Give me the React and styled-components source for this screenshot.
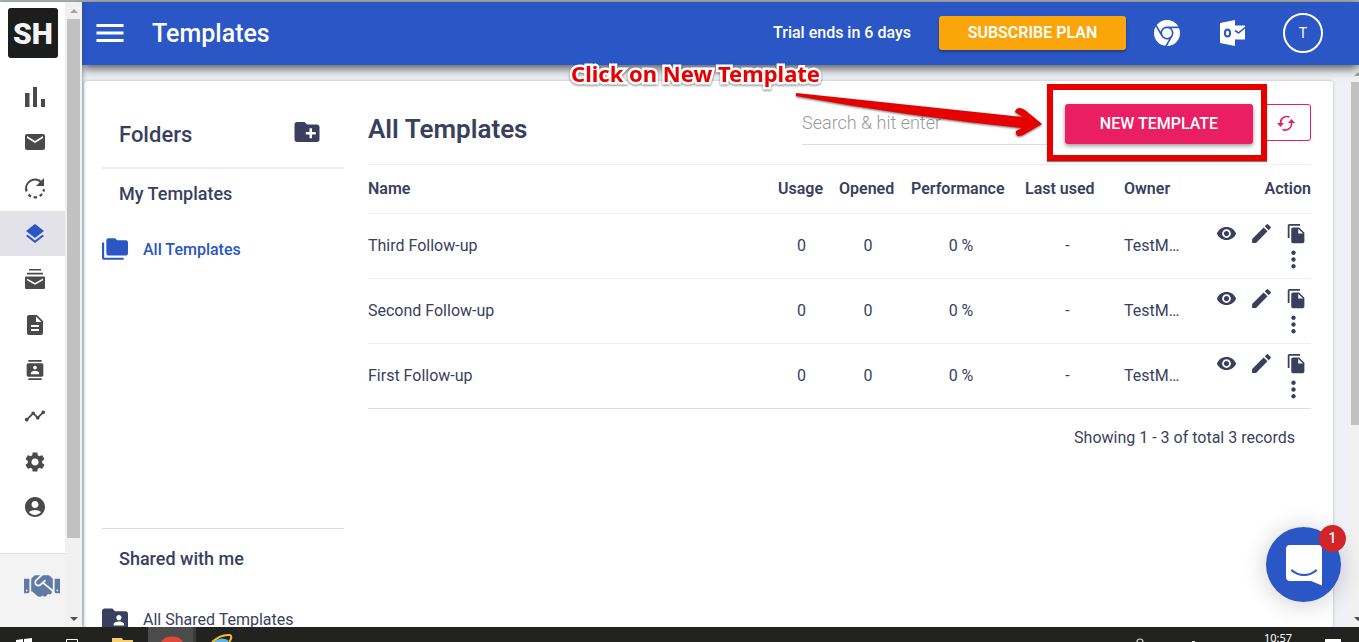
import styled, { createGlobalStyle, css } from "styled-components";
import {
  MdMenu,
  MdEmail,
  MdLayers,
  MdDescription,
  MdContacts,
  MdTimeline,
  MdSettings,
  MdAccountCircle,
  MdCreateNewFolder,
  MdFolderShared,
  MdVisibility,
  MdEdit,
  MdFileCopy,
  MdMoreVert,
} from "react-icons/md";
import { FaHandshake } from "react-icons/fa";

const GlobalStyle = createGlobalStyle`
  * {
    box-sizing: border-box;
  }
  body {
    margin: 0;
    overflow: hidden;
    font-family: Roboto, "Liberation Sans", sans-serif;
    font-size: 16px;
    color: #3a3f5e;
  }
  h1, h2, h3, p, ul {
    margin: 0;
    padding: 0;
  }
  button {
    font-family: inherit;
    cursor: pointer;
  }
`;

const LogoMark = () => (
  <svg width="50" height="50" viewBox="0 0 50 50" fill="#f4f4f4" fontFamily="Roboto, sans-serif" fontSize="30" fontWeight="900">
    <text x="25" y="36" textAnchor="middle">SH</text>
  </svg>
);

const ChartIcon = () => (
  <svg width="24" height="24" viewBox="0 0 24 24" fill="currentColor">
    <path d="M2 8h4.500v14H2zM10 2h4v20h-4zM18 14h4v8h-4z" />
  </svg>
);

const RestartIcon = () => (
  <svg width="24" height="24" viewBox="0 0 24 24" fill="none" stroke="currentColor" strokeWidth="2.2">
    <path d="M3.6 15.5A9 9 0 0 1 18.5 6.2" />
    <path d="M21 2v8h-8z" fill="currentColor" stroke="none" />
    <path d="M5.5 18.5a9 9 0 0 0 2.6 1.9M10.6 21.2a9 9 0 0 0 3.4-.1M16.6 20a9 9 0 0 0 2.5-2M20.4 15.6a9 9 0 0 0 .6-2.4" />
  </svg>
);

const StackedMailIcon = () => (
  <svg width="24" height="24" viewBox="0 0 24 24" fill="currentColor">
    <path d="M6 2h12v1.6H6zM4 5.8h16v1.7H4z" />
    <path d="M3 9.5h18a1 1 0 0 1 1 1V21a1 1 0 0 1-1 1H3a1 1 0 0 1-1-1V10.500a1 1 0 0 1 1-1zm1 2v1.800l8 4.500 8-4.500v-1.800l-8 4.500z" fillRule="evenodd" />
  </svg>
);

const FoldersIcon = () => (
  <svg width="26" height="26" viewBox="0 0 24 24" fill="currentColor">
    <path d="M22 4h-8l-2-2H6a2 2 0 0 0-2 2v12a2 2 0 0 0 2 2h16a2 2 0 0 0 2-2V6a2 2 0 0 0-2-2M2 6H0v14a2 2 0 0 0 2 2h18v-2H2V6z" />
  </svg>
);

const ChromeIcon = () => (
  <svg width="26" height="26" viewBox="4 4 16 16" fill="currentColor">
    <path d="M12 20l3.460-6h-.010c.340-.600.550-1.270.550-2 0-1.200-.540-2.270-1.380-3h4.790c.380.930.590 1.940.590 3a8 8 0 0 1-8 8M4 12c0-1.460.390-2.820 1.070-4l3.470 6h.010c.690 1.190 1.950 2 3.450 2 .450 0 .880-.090 1.290-.230l-2.400 4.140C7 19.370 4 16.040 4 12m11 0a3 3 0 0 1-6 0 3 3 0 0 1 6 0m-3-8c2.960 0 5.540 1.610 6.920 4H12c-1.940 0-3.550 1.380-3.920 3.210L5.700 7.080C7.160 5.210 9.440 4 12 4" />
  </svg>
);

const OutlookIcon = () => (
  <svg width="26" height="26" viewBox="0 0 26 26">
    <path d="M0 3l15-3v26L0 23z" fill="#fff" />
    <ellipse cx="7.500" cy="13" rx="2.600" ry="3.600" fill="none" stroke="#2a56c6" strokeWidth="2" />
    <path d="M15 5.500h10v14H15z" fill="#fff" />
    <path d="M15 10.500l3.500 2.500L25 7.500" fill="none" stroke="#2a56c6" strokeWidth="1.600" />
  </svg>
);

const RefreshIcon = () => (
  <svg width="20" height="20" viewBox="0 0 20 20" fill="none" stroke="currentColor" strokeWidth="1.600">
    <path d="M13.500 4A6.500 6.500 0 0 0 4.500 10.500M6.500 16.500A6.500 6.500 0 0 0 15.500 9.500" />
    <path d="M1 10h7l-3.500 4zM12 10h7l-3.500-4z" fill="currentColor" stroke="none" />
  </svg>
);

const ChatIcon = () => (
  <svg width="36" height="41" viewBox="0 0 36 41">
    <path d="M4 0h28a4 4 0 0 1 4 4v36.500L25 36H4a4 4 0 0 1-4-4V4a4 4 0 0 1 4-4z" fill="#fff" />
    <path d="M6 25.500c7 6 17 6 24 0" fill="none" stroke="#2a56c6" strokeWidth="2.200" strokeLinecap="round" />
  </svg>
);

const navItems = [
  { label: "Dashboard", icon: <ChartIcon /> },
  { label: "Emails", icon: <MdEmail size={24} /> },
  { label: "Campaigns", icon: <RestartIcon /> },
  { label: "Templates", icon: <MdLayers size={24} />, active: true },
  { label: "Outbox", icon: <StackedMailIcon /> },
  { label: "Documents", icon: <MdDescription size={24} /> },
  { label: "Contacts", icon: <MdContacts size={20} /> },
  { label: "Reports", icon: <MdTimeline size={22} /> },
  { label: "Settings", icon: <MdSettings size={24} /> },
  { label: "Account", icon: <MdAccountCircle size={24} /> },
];

const templates = [
  { name: "Third Follow-up", usage: 0, opened: 0, performance: "0 %", lastUsed: "-", owner: "TestM…" },
  { name: "Second Follow-up", usage: 0, opened: 0, performance: "0 %", lastUsed: "-", owner: "TestM…" },
  { name: "First Follow-up", usage: 0, opened: 0, performance: "0 %", lastUsed: "-", owner: "TestM…" },
];

const Sidebar = () => (
  <SideBar>
    <SideMenu>
      <Logo href="#">
        <LogoMark />
      </Logo>
      <NavList>
        {navItems.map(({ label, icon, active }) => (
          <NavItem key={label}>
            <NavLink href="#" aria-label={label} $active={active}>
              {icon}
            </NavLink>
          </NavItem>
        ))}
      </NavList>
      <SideFooter>
        <a href="#" aria-label="Partners">
          <FaHandshake size={36} color="#5f7aa3" />
        </a>
      </SideFooter>
    </SideMenu>
    <ScrollTrack>
      <ArrowUp />
      <Thumb $share="83%" />
      <ArrowDown />
    </ScrollTrack>
  </SideBar>
);

const Header = () => (
  <TopBar>
    <IconButton aria-label="Menu">
      <MdMenu size={36} />
    </IconButton>
    <PageTitle>Templates</PageTitle>
    <Trial>Trial ends in 6 days</Trial>
    <SubscribeButton>SUBSCRIBE PLAN</SubscribeButton>
    <HeaderIcons>
      <IconButton aria-label="Chrome extension">
        <ChromeIcon />
      </IconButton>
      <IconButton aria-label="Outlook add-in">
        <OutlookIcon />
      </IconButton>
    </HeaderIcons>
    <Avatar>T</Avatar>
  </TopBar>
);

const Folders = () => (
  <FolderPanel>
    <FolderHead>
      <FolderTitle>Folders</FolderTitle>
      <IconButton aria-label="New folder">
        <MdCreateNewFolder size={30} />
      </IconButton>
    </FolderHead>
    <FolderGroup $grow>
      <GroupTitle>My Templates</GroupTitle>
      <FolderLink href="#" $active>
        <FoldersIcon />
        All Templates
      </FolderLink>
    </FolderGroup>
    <FolderGroup>
      <GroupTitle>Shared with me</GroupTitle>
      <FolderLink href="#" $top="34px">
        <MdFolderShared size={26} viewBox="2 2 20 20" />
        All Shared Templates
      </FolderLink>
    </FolderGroup>
  </FolderPanel>
);

const TemplateTable = () => (
  <Table>
    <thead>
      <tr>
        <Th>Name</Th>
        <Th $width="61px">Usage</Th>
        <Th $width="72px">Opened</Th>
        <Th $width="114px">Performance</Th>
        <Th $width="99px">Last used</Th>
        <Th $width="74px">Owner</Th>
        <Th $width="120px" $right>
          Action
        </Th>
      </tr>
    </thead>
    <tbody>
      {templates.map((item) => (
        <tr key={item.name}>
          <Td>{item.name}</Td>
          <Td $center>{item.usage}</Td>
          <Td $center>{item.opened}</Td>
          <Td $center>{item.performance}</Td>
          <Td $center>{item.lastUsed}</Td>
          <Td>{item.owner}</Td>
          <Td>
            <Actions>
              <IconButton aria-label="Preview">
                <MdVisibility size={21} />
              </IconButton>
              <IconButton aria-label="Edit">
                <MdEdit size={25} />
              </IconButton>
              <IconButton aria-label="Copy">
                <MdFileCopy size={21} />
              </IconButton>
              <IconButton aria-label="More">
                <MdMoreVert size={27} />
              </IconButton>
            </Actions>
          </Td>
        </tr>
      ))}
    </tbody>
  </Table>
);

const App = () => (
  <Screen>
    <GlobalStyle />
    <Window>
      <Sidebar />
      <Content>
        <Header />
        <Page>
          <Card>
            <Folders />
            <Main>
              <MainHead>
                <MainTitle>All Templates</MainTitle>
                <Search type="search" aria-label="Search" placeholder="Search & hit enter" />
                <Callout>
                  <NewButton>NEW TEMPLATE</NewButton>
                  <CalloutBox />
                  <CalloutArrow width="260" height="56" viewBox="0 0 260 56">
                    <path d="M3 5L230 29L222 24Q224 17 232 22L249 36L230 47Q222 50 223 43L229 40Q112 28 3 8z" fill="#e60000" />
                  </CalloutArrow>
                  <CalloutText>Click on New Template</CalloutText>
                </Callout>
                <RefreshButton aria-label="Refresh">
                  <RefreshIcon />
                </RefreshButton>
              </MainHead>
              <TemplateTable />
              <Summary>Showing 1 - 3 of total 3 records</Summary>
            </Main>
          </Card>
          <ScrollTrack>
            <ArrowUp />
            <Thumb $share="61%" />
            <ArrowDown />
          </ScrollTrack>
        </Page>
      </Content>
    </Window>
    <ChatButton aria-label="Open chat">
      <ChatIcon />
      <ChatBadge>1</ChatBadge>
    </ChatButton>
    <TaskBar>
      <TaskIcons width="260" height="15" viewBox="0 0 260 15">
        <path d="M16 13l7-1v3h-7zM24 12l8-1v4h-8z" fill="#fff" />
        <path d="M66.500 15v-2.500h11V15" fill="none" stroke="#fff" />
        <path d="M112 11h10l1 2h10v2h-21z" fill="#f6cf6b" />
        <path d="M148 0h45v15h-45z" fill="#4b4b4b" />
        <path d="M193 0h3v15h-3z" fill="#3a3a3a" />
        <path d="M161 15a12 9 0 0 1 22 0z" fill="#e0483e" />
        <path d="M213 15q8-6 15-2v2z" fill="#59b7ee" />
        <path d="M212 15q9-8 18-7 3 2-1 7" fill="none" stroke="#f0bf2a" strokeWidth="2" />
      </TaskIcons>
      <TrayIcons width="70" height="15" viewBox="0 0 70 15">
        <path d="M5 15a3 3 0 0 1 6 0" fill="none" stroke="#ddd" strokeWidth="1.200" />
        <path d="M60 14h3v1h-3z" fill="#ddd" />
      </TrayIcons>
      <Clock>10:57</Clock>
      <TaskIcons width="34" height="15" viewBox="0 0 34 15">
        <path d="M0 12h16v3H0z" fill="#fff" />
      </TaskIcons>
    </TaskBar>
  </Screen>
);

export default App;

const Screen = styled.div`
  display: flex;
  flex-direction: column;
  height: 100vh;
  overflow: hidden;
`;
const Window = styled.div`
  flex: 1;
  min-height: 0;
  display: flex;
  border-top: 2px solid #b4bab4;
`;
const SideBar = styled.aside`
  display: flex;
  z-index: 2;
  background: white;
  box-shadow: 1px 0 4px rgba(40, 80, 90, 0.5);
`;
const SideMenu = styled.nav`
  display: flex;
  flex-direction: column;
  width: 65px;
`;
const Logo = styled.a`
  display: flex;
  width: 50px;
  height: 50px;
  margin: 6px 8px 16px;
  border-radius: 3px;
  background: #1c1e1d;
`;
const NavList = styled.ul`
  flex: 1;
  display: flex;
  flex-direction: column;
  margin-bottom: 23px;
  list-style: none;
`;
const NavItem = styled.li`
  flex: 1;
  display: flex;
`;
const NavLink = styled.a`
  flex: 1;
  display: flex;
  align-items: center;
  justify-content: center;
  padding-left: 4px;
  color: ${({ $active }) => ($active ? "#2a56c6" : "#4a4a4a")};
  background: ${({ $active }) => ($active ? "#e2e2e8" : "none")};
`;
const SideFooter = styled.div`
  height: 74px;
  padding: 14px 0 0 24px;
  background: #f3f3f3;
  border-top: 1px solid #dcdcdc;
`;
const ScrollTrack = styled.div`
  display: flex;
  flex-direction: column;
  flex-shrink: 0;
  width: 17px;
  background: #f1f1f1;
`;
const Thumb = styled.div`
  height: ${({ $share }) => $share};
  margin: 0 2px auto;
  background: #c1c1c1;
`;
const arrow = css`
  flex-shrink: 0;
  align-self: center;
  width: 0;
  height: 4px;
  border: 4px solid transparent;
`;
const ArrowUp = styled.div`
  ${arrow}
  margin: 7px 0 6px;
  border-width: 0 4px 4px;
  border-bottom-color: #a3a3a3;
`;
const ArrowDown = styled.div`
  ${arrow}
  margin: 7px 0 6px;
  border-width: 4px 4px 0;
  border-top-color: #505050;
`;
const Content = styled.div`
  flex: 1;
  min-width: 0;
  display: flex;
  flex-direction: column;
`;
const TopBar = styled.header`
  display: flex;
  align-items: center;
  flex-shrink: 0;
  z-index: 1;
  height: 63px;
  padding: 0 36px 2px 10px;
  background: #2a56c6;
  color: white;
  box-shadow: 0 3px 10px rgba(0, 0, 0, 0.7);
`;
const IconButton = styled.button`
  display: flex;
  padding: 0;
  border: none;
  background: none;
  color: inherit;
`;
const PageTitle = styled.h1`
  margin: 0 auto 0 24px;
  padding-top: 2px;
  font-size: 25px;
  font-weight: 500;
`;
const Trial = styled.p`
  font-weight: 500;
`;
const SubscribeButton = styled.button`
  width: 187px;
  height: 34px;
  margin: 0 28px;
  border: none;
  border-radius: 3px;
  background: #faa50a;
  color: white;
  font-size: 16px;
  font-weight: 600;
  box-shadow: 0 2px 3px rgba(0, 0, 0, 0.3);
`;
const HeaderIcons = styled.div`
  display: flex;
  gap: 40px;
  margin-right: 37px;
`;
const Avatar = styled.button`
  width: 40px;
  height: 40px;
  border: 2px solid white;
  border-radius: 50%;
  background: none;
  color: white;
  font-size: 14px;
`;
const Page = styled.div`
  flex: 1;
  min-height: 0;
  display: flex;
  margin-right: -7px;
  background: #f0f1f7;
`;
const Card = styled.div`
  flex: 1;
  display: flex;
  min-width: 0;
  gap: 24px;
  margin: 16px 16px 0 2px;
  padding: 0 22px 0 18px;
  background: white;
  border-radius: 3px;
  box-shadow: 0 0 3px rgba(0, 0, 0, 0.25);
`;
const FolderPanel = styled.section`
  display: flex;
  flex-direction: column;
  flex-shrink: 0;
  width: 242px;
`;
const FolderHead = styled.div`
  display: flex;
  align-items: center;
  justify-content: space-between;
  height: 88px;
  padding: 16px 22px 0 17px;
  border-bottom: 2px solid #eee;
`;
const FolderTitle = styled.h2`
  padding-top: 4px;
  font-size: 22px;
  font-weight: 500;
`;
const FolderGroup = styled.div`
  flex: ${({ $grow }) => ($grow ? 1 : "none")};
  height: 99px;
  padding-top: 14px;
  & + & {
    padding-top: 19px;
    border-top: 1px solid #ddd;
  }
`;
const GroupTitle = styled.h3`
  padding-left: 17px;
  font-size: 18px;
  line-height: 22px;
  font-weight: 500;
`;
const FolderLink = styled.a`
  display: flex;
  align-items: center;
  gap: 15px;
  height: 30px;
  margin-top: ${({ $top = "29px" }) => $top};
  color: ${({ $active }) => ($active ? "#2a56c6" : "inherit")};
  font-weight: ${({ $active }) => ($active ? 500 : 400)};
  text-decoration: none;
`;
const Main = styled.main`
  flex: 1;
  min-width: 0;
`;
const MainHead = styled.div`
  display: flex;
  align-items: flex-start;
  height: 84px;
  padding-top: 23px;
  border-bottom: 1px solid #eee;
`;
const MainTitle = styled.h2`
  margin-right: auto;
  line-height: 50px;
  font-size: 26px;
  font-weight: 600;
`;
const Search = styled.input`
  width: 246px;
  height: 41px;
  margin-right: 17px;
  padding: 0 0 4px;
  border: none;
  border-bottom: 1px solid #ddd;
  outline: none;
  background: none;
  font-family: inherit;
  font-size: 18px;
  font-weight: 300;
  &::placeholder {
    color: #999;
  }
`;
const Callout = styled.div`
  position: relative;
`;
const NewButton = styled.button`
  display: block;
  width: 188px;
  height: 40px;
  padding: 0 0 2px;
  border: none;
  border-radius: 3px;
  background: #e91e63;
  color: white;
  font-size: 16px;
  font-weight: 500;
  box-shadow: 0 2px 4px rgba(0, 0, 0, 0.4);
`;
const CalloutBox = styled.div`
  position: absolute;
  inset: -20px -14px -17px -18px;
  border: 6px solid #e60000;
  box-shadow: 0 1px 1px rgba(0, 0, 0, 0.5);
`;
const CalloutArrow = styled.svg`
  position: absolute;
  top: -16px;
  left: -272px;
  filter: drop-shadow(0 1px 1px rgba(0, 0, 0, 0.6));
`;
const CalloutText = styled.p`
  position: absolute;
  z-index: 3;
  top: -45px;
  right: 433px;
  white-space: nowrap;
  font-family: "Noto Sans", sans-serif;
  font-size: 22px;
  line-height: 28px;
  font-weight: 700;
  color: #e60000;
  -webkit-text-stroke: 5px white;
  paint-order: stroke fill;
  filter: drop-shadow(0 1px 1px rgba(0, 0, 0, 0.5));
`;
const RefreshButton = styled.button`
  display: flex;
  align-items: center;
  justify-content: center;
  width: 50px;
  height: 37px;
  margin-left: 8px;
  border: 1px solid #e91e63;
  border-radius: 3px;
  background: white;
  color: #e91e63;
`;
const Table = styled.table`
  width: 100%;
  table-layout: fixed;
  border-collapse: collapse;
`;
const Th = styled.th`
  width: ${({ $width }) => $width};
  height: 48px;
  padding: 0 0 0 7px;
  border-bottom: 1px solid #eee;
  font-weight: 600;
  text-align: ${({ $right }) => ($right ? "right" : "left")};
  white-space: nowrap;
  &:first-child {
    padding-left: 0;
  }
`;
const Td = styled.td`
  height: 65px;
  padding: 0 0 0 7px;
  border-bottom: 1px solid #eee;
  white-space: nowrap;
  ${({ $center }) =>
    $center &&
    css`
      padding: 0;
      text-align: center;
    `}
  &:first-child {
    padding-left: 0;
  }
  &:last-child {
    padding: 0;
  }
  tr:last-child > & {
    border-color: #ddd;
  }
`;
const Actions = styled.div`
  display: flex;
  flex-wrap: wrap;
  align-items: center;
  justify-content: flex-end;
  column-gap: 12px;
  padding: 2px 4px 0 0;
`;
const Summary = styled.p`
  padding: 18px 16px 0;
  line-height: 22px;
  text-align: right;
`;
const ChatButton = styled.button`
  position: fixed;
  z-index: 4;
  right: 18px;
  bottom: 40px;
  display: flex;
  align-items: center;
  justify-content: center;
  width: 75px;
  height: 75px;
  padding: 2px 0 0;
  border: none;
  border-radius: 50%;
  background: #2a56c6;
  box-shadow: 0 2px 24px rgba(0, 0, 0, 0.2);
`;
const ChatBadge = styled.span`
  position: absolute;
  top: -2px;
  right: -5px;
  width: 27px;
  height: 27px;
  border-radius: 50%;
  background: #d32428;
  color: white;
  font-size: 14px;
  line-height: 27px;
  font-weight: 500;
`;
const TaskBar = styled.footer`
  display: flex;
  z-index: 3;
  height: 15px;
  background: #222221;
  overflow: hidden;
`;
const TaskIcons = styled.svg`
  flex-shrink: 0;
`;
const TrayIcons = styled.svg`
  flex-shrink: 0;
  margin: 0 62px 0 auto;
`;
const Clock = styled.time`
  margin: 3px 33px 0 0;
  color: white;
  font-family: "Noto Sans", sans-serif;
  font-size: 11px;
  line-height: 15px;
`;
